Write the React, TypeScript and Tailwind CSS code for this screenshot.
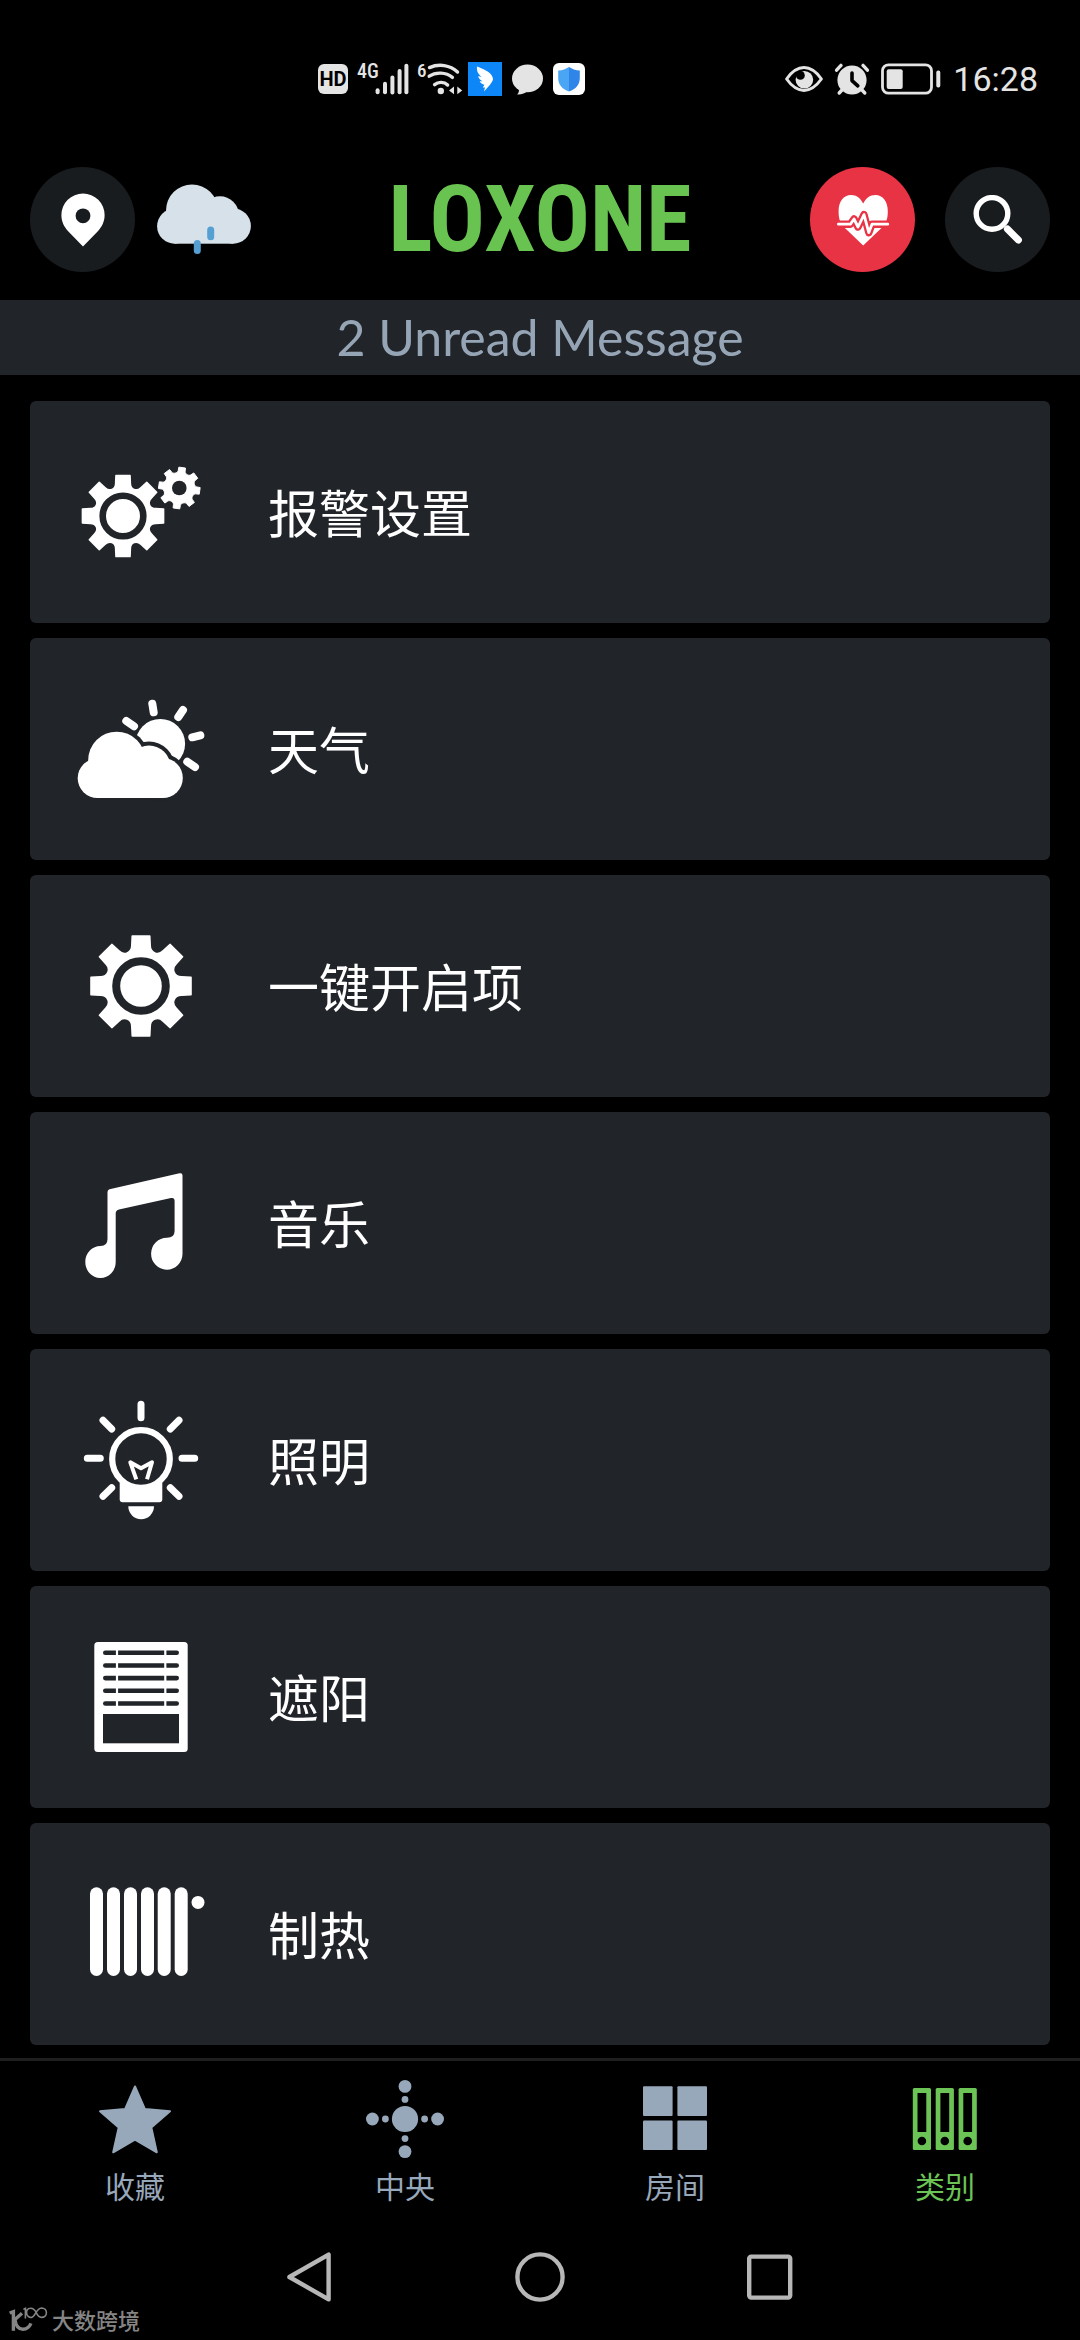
import type { ReactNode } from "react";

type GearProps = { cx: number; cy: number; r: number; half: number; depth: number; turn?: number };

/** Outline of an eight-toothed cog wheel with rounded valleys. */
function gearPath({ cx, cy, r, half, depth, turn = 0 }: GearProps) {
  const at = (tooth: number, x: number, y: number) => {
    const a = ((tooth * 45 + turn) * Math.PI) / 180;
    const px = cx + x * Math.cos(a) + y * Math.sin(a);
    const py = cy + x * Math.sin(a) - y * Math.cos(a);
    return `${px.toFixed(2)} ${py.toFixed(2)}`;
  };
  let d = `M${at(0, -half, r - depth)}`;
  for (let i = 0; i < 8; i++) {
    d += `L${at(i, -half * 0.95, r)}L${at(i, half * 0.95, r)}L${at(i, half, r - depth)}`;
    d += `C${at(i, half, r - depth * 1.75)} ${at(i + 1, -half, r - depth * 1.75)} ${at(i + 1, -half, r - depth)}`;
  }
  return d + "Z";
}

function Icon({ children }: { children: ReactNode }) {
  return (
    <svg viewBox="0 0 130 130" className="size-[130px] shrink-0 overflow-visible" fill="#fff" aria-hidden="true">
      {children}
    </svg>
  );
}

const CARD = "#212429";

function AlarmSettingsIcon() {
  return (
    <Icon>
      <path d={gearPath({ cx: 47, cy: 69, r: 40.6, half: 7.4, depth: 8 })} stroke="#fff" strokeWidth="1.5" strokeLinejoin="round" />
      <circle cx="47" cy="69" r="20.3" fill="none" stroke={CARD} strokeWidth="6.6" />
      <path d={gearPath({ cx: 103.3, cy: 41, r: 20.6, half: 3.5, depth: 3.4, turn: 8 })} stroke="#fff" strokeWidth="1" strokeLinejoin="round" />
      <circle cx="103.3" cy="41" r="7.3" fill={CARD} />
    </Icon>
  );
}

function WeatherIcon() {
  const puffs = [
    [21.5, 94.2, 19.8],
    [86.8, 94, 20],
    [40.7, 76.2, 28.5],
    [73, 83, 21.5],
  ];
  return (
    <Icon>
      <circle cx="84.3" cy="59.7" r="24.8" />
      {puffs.slice(1).map(([x, y, r]) => (
        <circle key={x} cx={x} cy={y} r={r + 4} fill={CARD} />
      ))}
      {puffs.map(([x, y, r]) => (
        <circle key={x} cx={x} cy={y} r={r} />
      ))}
      <rect x="21.5" y="80" width="65.3" height="34" />
      <path
        d="M76.3 19.7L77.7 28.3M107 26L102.3 33M124.3 51.3L116.3 53.3M111.3 77.7L119 83M50.3 37L58 42.3"
        stroke="#fff"
        strokeWidth="8"
        strokeLinecap="round"
      />
    </Icon>
  );
}

function GearIcon() {
  return (
    <Icon>
      <path d={gearPath({ cx: 65, cy: 65, r: 50, half: 9.2, depth: 9.6 })} stroke="#fff" strokeWidth="1.6" strokeLinejoin="round" />
      <circle cx="65" cy="65" r="24.8" fill="none" stroke={CARD} strokeWidth="8" />
    </Icon>
  );
}

function MusicIcon() {
  return (
    <Icon>
      <path d="M31.5 34Q31.5 31.8 33.5 31.3L103.5 15.3Q106.5 14.6 106.5 17.5V96A15.7 16 0 1 1 91 79.7Q98.6 79.7 98.6 73V43Q98.6 39.3 95 40L43 51.5Q39.7 52.3 39.7 55.5V104.3A15.2 16 0 1 1 24.6 88Q31.5 88 31.5 81Z" />
    </Icon>
  );
}

function BulbIcon() {
  return (
    <Icon>
      <rect x="43.7" y="80" width="42.6" height="27.3" rx="3" />
      <circle cx="65" cy="64" r="28.8" fill={CARD} stroke="#fff" strokeWidth="6.2" />
      <path d="M60.3 84.3L54.3 67.3L65 73.3L76 67.3L71 84.3" fill="none" stroke="#fff" strokeWidth="4" strokeLinejoin="round" />
      <path d="M52.3 111.3H78A12.8 12.8 0 0 1 52.3 111.3Z" />
      <path
        d="M65 9.3V22.7M11.3 63.3H24.3M106 63.3H118.7M27 25.3L35.7 34M103 25.3L94.3 34M27 101.3L35.7 92.7M103 101.3L94.3 92.7"
        stroke="#fff"
        strokeWidth="7"
        strokeLinecap="round"
      />
    </Icon>
  );
}

function BlindsIcon() {
  return (
    <Icon>
      <rect x="18.3" y="10" width="93.4" height="110" rx="3.5" />
      {[18.5, 31.2, 43.8, 56.5, 69.2].map((y) => (
        <rect key={y} x="27" y={y} width="76" height="4.6" rx="2.3" fill={CARD} />
      ))}
      <path d="M41 15V76M89.3 15V76" stroke="#fff" strokeWidth="2.2" />
      <rect x="27" y="82" width="76" height="29.3" fill={CARD} />
    </Icon>
  );
}

function RadiatorIcon() {
  return (
    <Icon>
      {[14, 31, 48, 65, 81.7, 98.7].map((x) => (
        <rect key={x} x={x} y="18.3" width="13" height="88.7" rx="6.5" />
      ))}
      <circle cx="122" cy="33.4" r="6.5" />
    </Icon>
  );
}

const categories = [
  { label: "报警设置", icon: <AlarmSettingsIcon /> },
  { label: "天气", icon: <WeatherIcon /> },
  { label: "一键开启项", icon: <GearIcon /> },
  { label: "音乐", icon: <MusicIcon /> },
  { label: "照明", icon: <BulbIcon /> },
  { label: "遮阳", icon: <BlindsIcon /> },
  { label: "制热", icon: <RadiatorIcon /> },
];

function TabIcon({ children }: { children: ReactNode }) {
  return (
    <svg viewBox="0 0 78 78" className="size-[78px]" fill="currentColor" aria-hidden="true">
      {children}
    </svg>
  );
}

const tabs = [
  {
    label: "收藏",
    active: false,
    icon: (
      <path
        d="M39 6.5L48.8 29L74 31.3L55.3 47.5L60.8 72.3L39 59.7L17.2 72.3L22.7 47.5L4 31.3L29.2 29Z"
        stroke="currentColor"
        strokeWidth="2"
        strokeLinejoin="round"
      />
    ),
  },
  {
    label: "中央",
    active: false,
    icon: (
      <>
        <circle cx="39" cy="39" r="13.1" />
        {[[0, -1], [0, 1], [-1, 0], [1, 0]].map(([x, y]) => (
          <g key={`${x}${y}`}>
            <circle cx={39 + x * 19.6} cy={39 + y * 19.6} r="3.4" />
            <circle cx={39 + x * 32.6} cy={39 + y * 32.6} r="6.4" />
          </g>
        ))}
      </>
    ),
  },
  {
    label: "房间",
    active: false,
    icon: (
      <>
        <rect x="7" y="6.3" width="29.6" height="29.6" rx="1" />
        <rect x="41.4" y="6.3" width="29.6" height="29.6" rx="1" />
        <rect x="7" y="40.5" width="29.6" height="29.6" rx="1" />
        <rect x="41.4" y="40.5" width="29.6" height="29.6" rx="1" />
      </>
    ),
  },
  {
    label: "类别",
    active: true,
    icon: (
      <>
        {[6.8, 29.7, 52.6].map((x) => (
          <g key={x}>
            <rect x={x} y="8" width="18.2" height="62" rx="1.5" />
            <rect x={x + 4.7} y="13" width="8.8" height="39" fill="#000" />
            <circle cx={x + 9.1} cy="61" r="4.3" fill="#000" />
          </g>
        ))}
      </>
    ),
  },
];

function StatusBar() {
  return (
    <div className="flex h-[158px] items-center justify-between pr-[42px] pl-[318px] text-[#e4e4e4]">
      <div className="flex items-center gap-[10px]">
        <span className="flex size-[30px] items-center justify-center rounded-md bg-[#e4e4e4] font-[Roboto] text-[20px] font-bold text-black">
          HD
        </span>
        <svg viewBox="0 0 50 32" className="h-8 w-[50px] overflow-visible" fill="currentColor" role="img" aria-label="4G signal">
          <text x="-1" y="15" fontSize="20" fontWeight="500" fontFamily="'Roboto Condensed', Roboto, sans-serif">4G</text>
          <rect x="17.6" y="25.3" width="4" height="6" rx="2" />
          <rect x="25" y="18.7" width="4" height="12.6" rx="2" />
          <rect x="32.4" y="12.4" width="4" height="19" rx="2" />
          <rect x="39.6" y="6" width="4" height="25.3" rx="2" />
          <rect x="46.4" y="0.7" width="4" height="30.6" rx="2" />
        </svg>
        <svg viewBox="0 0 40 32" className="h-8 w-10 overflow-visible" fill="currentColor" role="img" aria-label="Wi-Fi 6">
          <text x="-1" y="14" fontSize="19" fontWeight="500" fontFamily="'Roboto Condensed', Roboto, sans-serif">6</text>
          <path
            d="M11.5 4.6C21 0.4 32 2 39.5 9M11.2 13.2C18 8.7 28 9.2 34.4 14.4M16.6 21.6C20.3 18.5 26.2 18.6 29.6 22"
            fill="none"
            stroke="currentColor"
            strokeWidth="3.4"
            strokeLinecap="round"
          />
          <circle cx="22.8" cy="28" r="3.2" />
          <path d="M36 23.5V31.3L31 27.4ZM39.3 23.5V31.3L44.2 27.4Z" />
        </svg>
        <svg viewBox="0 0 34 34" className="size-[34px]" aria-hidden="true">
          <rect width="34" height="34" fill="#0d86f8" />
          <path
            d="M9 4.6C14 6.6 22.5 9.6 24.6 15.2C25.4 17.2 24.8 18.6 23.8 20.1L22.2 22.6L19.6 25.4L16 29.6L17 25.6L14.8 25.4L16.4 22.8C14.2 22.4 12.6 21 11.6 19.2L14.6 19.3C12 18 10.6 16.4 10.2 14L13.4 14.9C10.4 12.2 8.4 9.4 9 4.6Z"
            fill="#fff"
          />
        </svg>
        <svg viewBox="0 0 31 31" className="size-[31px]" fill="currentColor" aria-hidden="true">
          <ellipse cx="15.5" cy="14.4" rx="15.5" ry="13.8" />
          <path d="M5.6 22C7.6 25.6 7.4 28.4 5.2 30.4C9.6 30.6 13.2 29.4 15.6 27Z" />
        </svg>
        <svg viewBox="0 0 32 32" className="size-8" aria-hidden="true">
          <rect width="32" height="32" rx="6" fill="#fff" />
          <path d="M16 4C19 6 22.6 7.2 26.8 7.6V15C26.8 21.6 23 26 16 28.6Z" fill="#2f86e8" />
          <path d="M16 4C13 6 9.4 7.2 5.2 7.6V15C5.2 21.6 9 26 16 28.6Z" fill="#4aa6f4" />
        </svg>
      </div>
      <div className="flex items-center gap-3">
        <svg viewBox="0 0 38 26" className="h-[26px] w-[38px] overflow-visible" aria-hidden="true">
          <path d="M1.6 13C7 5.4 12.6 1.6 19 1.6S31 5.4 36.4 13C31 20.6 25.4 24.4 19 24.4S7 20.6 1.6 13Z" fill="none" stroke="currentColor" strokeWidth="3" strokeLinejoin="round" />
          <circle cx="19.4" cy="13.8" r="8.8" fill="currentColor" />
          <circle cx="15.4" cy="9.4" r="4.4" fill="#000" />
        </svg>
        <svg viewBox="0 0 34 32" className="h-8 w-[34px] overflow-visible" aria-hidden="true">
          <circle cx="17" cy="17" r="14.6" fill="currentColor" />
          <path d="M1.6 7.2L6 2.4M32.4 7.2L28 2.4M7 27L4.2 30M27 27L29.8 30" stroke="currentColor" strokeWidth="3.4" strokeLinecap="round" />
          <path d="M17 10V17.6L22.8 22.8" fill="none" stroke="#000" strokeWidth="3.6" strokeLinecap="round" strokeLinejoin="round" />
        </svg>
        <svg viewBox="0 0 60 32" className="h-8 w-[60px]" fill="currentColor" role="img" aria-label="Battery">
          <rect x="1.5" y="1.8" width="49" height="28.4" rx="6" fill="none" stroke="currentColor" strokeWidth="2.8" />
          <rect x="5.7" y="6.3" width="16" height="19.6" rx="2" />
          <rect x="55.3" y="7.6" width="4" height="17" rx="1.8" />
        </svg>
        <span className="font-[Roboto] text-[34px] leading-10">16:28</span>
      </div>
    </div>
  );
}

function Header() {
  return (
    <header className="grid grid-cols-[1fr_auto_1fr] items-center px-[30px] pt-[9px] pb-7">
      <div className="flex items-center gap-[22px]">
        <button type="button" aria-label="Location" className="flex size-[105px] items-center justify-center rounded-full bg-[#191c1f]">
          <svg viewBox="0 0 44 54" className="h-[54px] w-11" aria-hidden="true">
            <path d="M22 53.6L7.4 38.4C3 33.8 0.4 28.6 0.4 22A21.6 21.4 0 0 1 43.6 22C43.6 28.6 41 33.8 36.6 38.4Z" fill="#fff" />
            <circle cx="22" cy="22.8" r="7.4" fill="#191c1f" />
          </svg>
        </button>
        <svg viewBox="0 0 94 72" className="h-[72px] w-[94px]" fill="#d6e1e9" role="img" aria-label="Light rain">
          <circle cx="35" cy="26.4" r="26" />
          <circle cx="63" cy="31" r="18.8" />
          <circle cx="17.6" cy="42.2" r="17.5" />
          <circle cx="76.2" cy="42" r="17.7" />
          <rect x="17.6" y="30" width="58.6" height="29.7" />
          <path d="M40.3 59.4V66.6M53.7 46V52.8" stroke="#569fd3" strokeWidth="7" strokeLinecap="round" />
        </svg>
      </div>
      <h1 className="font-['Roboto_Condensed',Roboto,sans-serif] text-[92px] leading-[100px] font-bold text-[#69c350]">LOXONE</h1>
      <div className="flex items-center justify-end gap-[30px]">
        <button type="button" aria-label="Health status" className="flex size-[105px] items-center justify-center rounded-full bg-[#e83345]">
          <svg viewBox="0 0 52 52" className="size-[52px] overflow-visible" aria-hidden="true">
            <path d="M26.2 51.4L6.6 32.8C2.6 28.6 1.6 23.6 1.6 17C1.6 7.6 6.6 1 14 1C19.6 1 23.6 4.4 26.2 9.6C28.8 4.4 32.8 1 38.4 1C45.8 1 50.8 7.6 50.8 17C50.8 23.6 49.8 28.6 45.8 32.8Z" fill="#fff" />
            <path d="M-1 30.2H13.4L17 25L21 33L27 20.6L31.8 38.6L35 30.2H53" fill="none" stroke="#e83345" strokeWidth="7.4" strokeLinejoin="round" />
            <path d="M1.4 30.2H13.4L17 25L21 33L27 20.6L31.8 38.6L35 30.2H50.8" fill="none" stroke="#fff" strokeWidth="2.8" strokeLinejoin="round" strokeLinecap="round" />
          </svg>
        </button>
        <button type="button" aria-label="Search" className="flex size-[105px] items-center justify-center rounded-full bg-[#191c1f]">
          <svg viewBox="0 0 50 50" className="size-[50px]" fill="none" stroke="#fff" aria-hidden="true">
            <circle cx="19" cy="18.4" r="15.8" strokeWidth="5.4" />
            <path d="M34.4 34L45.4 45" strokeWidth="7" strokeLinecap="round" />
          </svg>
        </button>
      </div>
    </header>
  );
}

function SystemNav() {
  return (
    <div className="flex items-center justify-center gap-[180px] pt-[50px] pb-[38px]">
      <button type="button" aria-label="Back">
        <svg viewBox="0 0 50 50" className="size-[50px]" fill="none" stroke="#b7b7b7" strokeWidth="4.4" strokeLinejoin="round" aria-hidden="true">
          <path d="M4.4 25L43.6 2.6V47.4Z" />
        </svg>
      </button>
      <button type="button" aria-label="Home">
        <svg viewBox="0 0 50 50" className="size-[50px]" fill="none" stroke="#b7b7b7" strokeWidth="4.4" aria-hidden="true">
          <circle cx="25" cy="25" r="22.6" />
        </svg>
      </button>
      <button type="button" aria-label="Recent apps">
        <svg viewBox="0 0 50 50" className="size-[50px]" fill="none" stroke="#b7b7b7" strokeWidth="4.4" aria-hidden="true">
          <rect x="4.2" y="4.6" width="41" height="41" rx="2" />
        </svg>
      </button>
    </div>
  );
}

function Watermark() {
  return (
    <div className="absolute bottom-2 left-[9px] flex items-center gap-1 text-[#858585]">
      <svg viewBox="0 0 39 26" className="h-[26px] w-[39px]" fill="none" stroke="currentColor" aria-hidden="true">
        <path d="M0.6 7L4.4 5.6V24.8M13 7.2L6 13.4C6.6 19.6 9.6 23.2 14 23.2C17.6 23.2 20.4 21 22 17.4" strokeWidth="3.4" />
        <path d="M14.4 3.4L16.4 2.4V12.4M27.4 6.8C25.6 3.4 23.6 2 21.4 2.2C18.4 2.4 17.4 4.6 17.6 7C17.8 10 20 11.8 22.6 11.4C26.4 10.8 27.2 2.2 32.4 2C35.6 2 37.4 4.2 37.4 6.8S35.4 11.4 32.6 11.4C30 11.4 28.4 9.4 27.4 6.8" strokeWidth="1.6" />
      </svg>
      <span className="text-[22px] leading-6 font-medium">大数跨境</span>
    </div>
  );
}

export default function App() {
  return (
    <div className="relative min-h-screen w-full bg-black font-['Noto_Sans_CJK_SC',sans-serif]">
      <StatusBar />
      <Header />
      <button type="button" className="block w-full bg-[#212429] text-center font-[Lato] text-[50px] leading-[75px] text-[#96a5b6]">
        2 Unread Message
      </button>
      <main>
        <ul className="flex flex-col gap-[15px] px-[30px] pt-[26px] pb-[13px]">
          {categories.map(({ label, icon }) => (
            <li key={label}>
              <button type="button" className="flex w-full items-center gap-[62px] rounded-md bg-[#212429] px-[46px] py-[46px] text-left text-[51px] leading-[60px] text-white">
                {icon}
                <span className="pb-0.5">{label}</span>
              </button>
            </li>
          ))}
        </ul>
      </main>
      <nav className="grid grid-cols-4 border-t-3 border-[#1e1e1e] pt-[19px] pb-0.5">
        {tabs.map(({ label, icon, active }) => (
          <button
            key={label}
            type="button"
            aria-current={active ? "page" : undefined}
            className={`flex flex-col items-center gap-3 text-[30px] leading-[30px] ${active ? "text-[#6cc456]" : "text-[#98a8bb]"}`}
          >
            <TabIcon>{icon}</TabIcon>
            <span>{label}</span>
          </button>
        ))}
      </nav>
      <SystemNav />
      <Watermark />
    </div>
  );
}
